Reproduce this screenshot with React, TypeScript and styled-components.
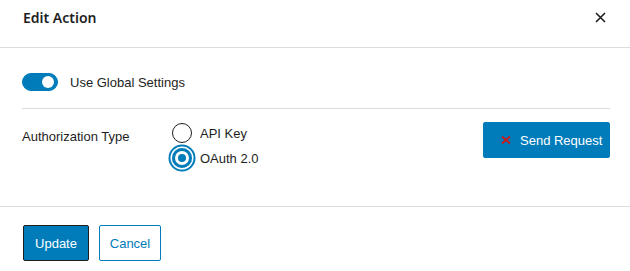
import styled, { createGlobalStyle } from 'styled-components'

const GlobalStyle = createGlobalStyle`
  body {
    margin: 0;
    background: #fff;
    font-family: "Liberation Sans", Arial, sans-serif;
    font-size: 13px;
    color: #1e1e1e;
  }
`

const Modal = styled.div`
  width: 630px;
  height: 271px;
  display: flex;
  flex-direction: column;
  background: #fff;
`

const Header = styled.header`
  height: 48px;
  box-sizing: border-box;
  display: flex;
  justify-content: space-between;
  align-items: flex-start;
  padding: 8px 24px 0 23px;
  border-bottom: 1px solid #dcdcde;

  h1 {
    margin: 0;
    font-family: "Noto Sans", "Liberation Sans", sans-serif;
    font-size: 14px;
    line-height: 20px;
    font-weight: 600;
    color: #1e1e1e;
  }
`

const CloseButton = styled.button`
  border: 0;
  background: none;
  padding: 0;
  margin-top: 4px;
  width: 11px;
  height: 11px;
  display: flex;
  color: #1e1e1e;
`

const Body = styled.div`
  flex: 1;
  padding: 25px 20px 0 22px;
  display: flex;
  flex-direction: column;
`

const ToggleRow = styled.label`
  display: flex;
  align-items: center;
  gap: 12px;
  height: 18px;
`

const Track = styled.span<{ $on: boolean }>`
  width: 36px;
  height: 18px;
  border-radius: 9px;
  box-sizing: border-box;
  background: ${(p) => (p.$on ? '#007cba' : '#fff')};
  border: 1px solid ${(p) => (p.$on ? '#007cba' : '#1e1e1e')};
  display: flex;
  align-items: center;
  justify-content: ${(p) => (p.$on ? 'flex-end' : 'flex-start')};
  padding: 0 3px;

  &::after {
    content: '';
    width: 12px;
    height: 12px;
    border-radius: 50%;
    background: #fff;
  }
`

const Divider = styled.hr`
  border: 0;
  border-top: 1px solid #dcdcde;
  margin: 17px 0 0;
`

const FieldRow = styled.div`
  display: flex;
  align-items: flex-start;
  padding-top: 14px;
`

const FieldLabel = styled.span`
  width: 150px;
  padding-top: 6px;
  line-height: 16px;
`

const RadioGroup = styled.div`
  display: flex;
  flex-direction: column;
  gap: 5px;
  flex: 1;
`

const RadioOption = styled.label`
  display: flex;
  align-items: center;
  gap: 8px;
  height: 20px;
`

const RadioDot = styled.span<{ $checked: boolean }>`
  width: 20px;
  height: 20px;
  box-sizing: border-box;
  border-radius: 50%;
  display: flex;
  align-items: center;
  justify-content: center;
  border: ${(p) => (p.$checked ? '3px solid #007cba' : '1.5px solid #1e1e1e')};
  box-shadow: ${(p) => (p.$checked ? '0 0 0 1.5px #fff, 0 0 0 3.5px #007cba' : 'none')};

  &::after {
    content: '';
    display: ${(p) => (p.$checked ? 'block' : 'none')};
    width: 8px;
    height: 8px;
    border-radius: 50%;
    background: #007cba;
  }
`

const Button = styled.button<{ $variant: 'primary' | 'secondary' }>`
  height: 36px;
  box-sizing: border-box;
  border-radius: 2px;
  font-family: inherit;
  font-size: 13px;
  display: flex;
  align-items: center;
  cursor: pointer;
  background: ${(p) => (p.$variant === 'primary' ? '#007cba' : '#fff')};
  color: ${(p) => (p.$variant === 'primary' ? '#fff' : '#007cba')};
  border: 1px solid #007cba;
`

const SendButton = styled(Button)`
  width: 127px;
  padding: 0 0 0 17px;
  gap: 9px;
  margin-top: -1px;
`

const Footer = styled.footer`
  height: 65px;
  box-sizing: border-box;
  border-top: 1px solid #dcdcde;
  display: flex;
  align-items: flex-start;
  gap: 10px;
  padding: 18px 0 0 23px;
`

const UpdateButton = styled(Button)`
  width: 66px;
  justify-content: center;
  border-color: #1e1e1e;
`

const CancelButton = styled(Button)`
  width: 62px;
  justify-content: center;
`

export default function App() {
  return (
    <>
      <GlobalStyle />
      <Modal>
        <Header>
          <h1>Edit Action</h1>
          <CloseButton aria-label="Close">
            <svg width="11" height="11" viewBox="0 0 11 11">
              <path d="M1 1L10 10M10 1L1 10" stroke="currentColor" strokeWidth="1.6" />
            </svg>
          </CloseButton>
        </Header>
        <Body>
          <ToggleRow>
            <Track $on />
            <span>Use Global Settings</span>
          </ToggleRow>
          <Divider />
          <FieldRow>
            <FieldLabel>Authorization Type</FieldLabel>
            <RadioGroup>
              <RadioOption>
                <RadioDot $checked={false} />
                <span>API Key</span>
              </RadioOption>
              <RadioOption>
                <RadioDot $checked />
                <span>OAuth 2.0</span>
              </RadioOption>
            </RadioGroup>
            <SendButton $variant="primary">
              <svg width="10" height="8" viewBox="0 0 10 8">
                <path d="M1 0.5L9 7.5M9 0.5L1 7.5" stroke="#cc1818" strokeWidth="1.8" />
              </svg>
              <span>Send Request</span>
            </SendButton>
          </FieldRow>
        </Body>
        <Footer>
          <UpdateButton $variant="primary">Update</UpdateButton>
          <CancelButton $variant="secondary">Cancel</CancelButton>
        </Footer>
      </Modal>
    </>
  )
}
